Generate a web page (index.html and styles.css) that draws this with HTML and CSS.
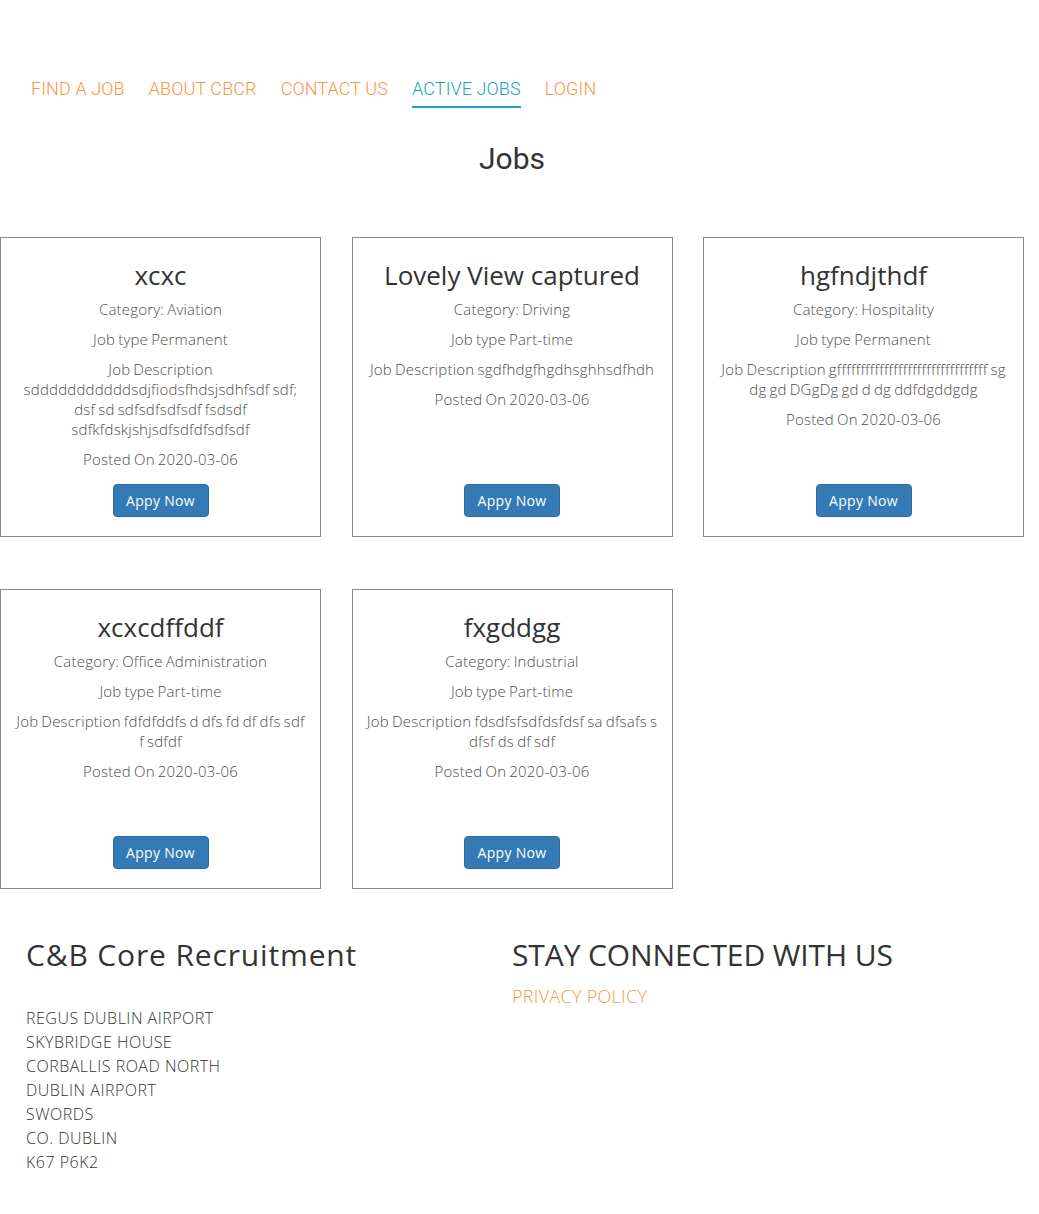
FILE: index.html
```html
<!DOCTYPE html>
<html lang="en">
<head>
<meta charset="utf-8">
<title>Jobs</title>
<link rel="stylesheet" href="styles.css">
</head>
<body>
<nav class="nav">
  <a class="nav-link" href="#">FIND A JOB</a>
  <a class="nav-link" href="#">ABOUT CBCR</a>
  <a class="nav-link" href="#">CONTACT US</a>
  <a class="nav-link active" href="#">ACTIVE JOBS</a>
  <a class="nav-link" href="#">LOGIN</a>
</nav>
<main class="page">
  <h1 class="page-title">Jobs</h1>
  <div class="jobs">
    <div class="card">
      <h2 class="card-title">xcxc</h2>
      <p class="card-line">Category: Aviation</p>
      <p class="card-line">Job type Permanent</p>
      <p class="card-line">Job Description sdddddddddddsdjfiodsfhdsjsdhfsdf sdf; dsf sd sdfsdfsdfsdf fsdsdf sdfkfdskjshjsdfsdfdfsdfsdf</p>
      <p class="card-line">Posted On 2020-03-06</p>
      <button class="btn">Appy Now</button>
    </div>
    <div class="card">
      <h2 class="card-title">Lovely View captured</h2>
      <p class="card-line">Category: Driving</p>
      <p class="card-line">Job type Part-time</p>
      <p class="card-line">Job Description sgdfhdgfhgdhsghhsdfhdh</p>
      <p class="card-line">Posted On 2020-03-06</p>
      <button class="btn">Appy Now</button>
    </div>
    <div class="card">
      <h2 class="card-title">hgfndjthdf</h2>
      <p class="card-line">Category: Hospitality</p>
      <p class="card-line">Job type Permanent</p>
      <p class="card-line">Job Description gffffffffffffffffffffffffffffffff sg dg gd DGgDg gd d dg ddfdgddgdg</p>
      <p class="card-line">Posted On 2020-03-06</p>
      <button class="btn">Appy Now</button>
    </div>
    <div class="card">
      <h2 class="card-title">xcxcdffddf</h2>
      <p class="card-line">Category: Office Administration</p>
      <p class="card-line">Job type Part-time</p>
      <p class="card-line">Job Description fdfdfddfs d dfs fd df dfs sdf f sdfdf</p>
      <p class="card-line">Posted On 2020-03-06</p>
      <button class="btn">Appy Now</button>
    </div>
    <div class="card">
      <h2 class="card-title">fxgddgg</h2>
      <p class="card-line">Category: Industrial</p>
      <p class="card-line">Job type Part-time</p>
      <p class="card-line">Job Description fdsdfsfsdfdsfdsf sa dfsafs s dfsf ds df sdf</p>
      <p class="card-line">Posted On 2020-03-06</p>
      <button class="btn">Appy Now</button>
    </div>
  </div>
</main>
<footer class="footer">
  <div class="footer-col">
    <h3 class="footer-title brand-title">C&amp;B Core Recruitment</h3>
    <address class="address">
      REGUS DUBLIN AIRPORT<br>
      SKYBRIDGE HOUSE<br>
      CORBALLIS ROAD NORTH<br>
      DUBLIN AIRPORT<br>
      SWORDS<br>
      CO. DUBLIN<br>
      K67 P6K2
    </address>
  </div>
  <div class="footer-col">
    <h3 class="footer-title connect-title">STAY CONNECTED WITH US</h3>
    <a class="footer-link" href="#">PRIVACY POLICY</a>
  </div>
</footer>
</body>
</html>
```
FILE: styles.css
```css
* { box-sizing: border-box; }
body {
  margin: 0;
  font-family: "Open Sans", "Lato", sans-serif;
  font-weight: 300;
  color: #333;
  background: #fff;
}
.nav {
  display: flex;
  gap: 24px;
  padding: 77px 0 0 31px;
  height: 108px;
}
.nav-link {
  font-family: "Roboto", sans-serif;
  font-weight: 300;
  font-size: 18px;
  line-height: 24px;
  letter-spacing: 0.1px;
  color: #f7964a;
  text-decoration: none;
  height: 31px;
}
.nav-link.active {
  color: #1ba1cd;
  border-bottom: 2px solid #1ba1cd;
}
.page { width: 1024px; }
.page-title {
  font-family: "Roboto", sans-serif;
  font-weight: 400;
  font-size: 30px;
  line-height: 40px;
  text-align: center;
  margin: 31px 0 58px;
}
.jobs {
  display: grid;
  grid-template-columns: repeat(3, 321px);
  column-gap: 30.5px;
  row-gap: 52px;
}
.card {
  border: 1px solid #888;
  display: flex;
  flex-direction: column;
  align-items: center;
  text-align: center;
  padding: 21px 13px 19px;
  min-height: 300px;
}
.card-title {
  font-size: 26px;
  font-weight: 400;
  line-height: 32px;
  margin: 0 0 8px;
  color: #333;
}
.card-line {
  font-size: 15px;
  line-height: 20px;
  letter-spacing: 0.2px;
  word-spacing: -1px;
  margin: 0 0 10px;
  color: #4d4d4d;
}
.btn {
  margin-top: auto;
  background: #337ab7;
  color: #fff;
  border: 1px solid #2e6da4;
  border-radius: 4px;
  font-family: "Open Sans", sans-serif;
  font-weight: 500;
  font-size: 14px;
  letter-spacing: 0.3px;
  height: 33px;
  width: 96px;
  padding: 0;
}
.footer {
  display: grid;
  grid-template-columns: 512px 1fr;
  padding: 46px 0 40px;
}
.footer-col:first-child { padding-left: 26px; }
.footer-title {
  font-size: 30px;
  font-weight: 400;
  line-height: 40px;
  margin: 0;
  color: #333;
}
.brand-title { letter-spacing: 0.85px; }
.connect-title { letter-spacing: -0.1px; }
.address {
  font-style: normal;
  font-size: 16px;
  line-height: 24px;
  letter-spacing: 0.5px;
  margin-top: 31px;
  color: #333;
}
.footer-link {
  display: block;
  margin-top: 9px;
  font-size: 18px;
  line-height: 24px;
  letter-spacing: 0.3px;
  color: #f7964a;
  text-decoration: none;
}
```
